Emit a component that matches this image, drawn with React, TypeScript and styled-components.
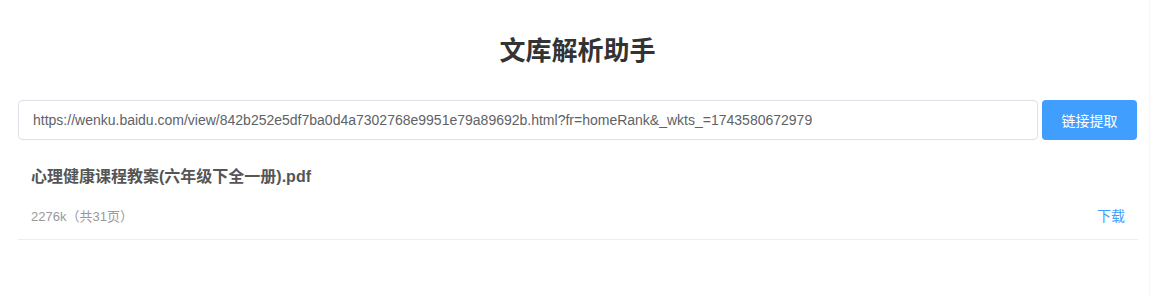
import React from "react";
import styled, { createGlobalStyle } from "styled-components";

const Global = createGlobalStyle`
  html, body { margin: 0; padding: 0; background: #fff; }
  body { font-family: "Liberation Sans", Arial, "Noto Sans CJK SC", sans-serif; }
  * { box-sizing: border-box; }
`;

const Page = styled.div`
  width: 1150px;
  min-height: 298px;
  border-right: 1px solid #f6f7f8;
  padding: 31px 12px 0 18px;
`;

const Title = styled.h1`
  margin: 0;
  height: 36px;
  line-height: 36px;
  text-align: center;
  font-size: 26px;
  font-weight: 700;
  color: #333;
  font-family: "Noto Sans CJK SC", sans-serif;
`;

const SearchRow = styled.div`
  display: flex;
  gap: 4px;
  margin-top: 33px;
  width: 1119px;
`;

const UrlInput = styled.input`
  flex: 1;
  height: 40px;
  border: 1px solid #dcdfe6;
  border-radius: 4px;
  padding: 0 14px;
  font-size: 14px;
  color: #606266;
  font-family: "Liberation Sans", Arial, sans-serif;
  outline: none;
  background: #fff;
`;

const Button = styled.button`
  width: 95px;
  height: 40px;
  border: none;
  border-radius: 4px;
  background: #409eff;
  color: #fff;
  font-size: 14px;
  font-family: "Noto Sans CJK SC", sans-serif;
  cursor: pointer;
`;

const ResultItem = styled.div`
  width: 1120px;
  margin-top: 25px;
  padding: 0 13px 14px 13px;
  border-bottom: 1px solid #ebeef5;
`;

const FileName = styled.div`
  font-size: 16px;
  line-height: 24px;
  font-weight: 700;
  color: #555;
  font-family: "Liberation Sans", Arial, "Noto Sans CJK SC", sans-serif;
`;

const MetaRow = styled.div`
  display: flex;
  justify-content: space-between;
  align-items: center;
  margin-top: 16px;
  height: 20px;
`;

const Meta = styled.span`
  font-size: 13px;
  color: #999;
  font-family: "Liberation Sans", Arial, "Noto Sans CJK SC", sans-serif;
`;

const Download = styled.a`
  font-size: 14px;
  color: #409eff;
  text-decoration: none;
  font-family: "Noto Sans CJK SC", sans-serif;
  cursor: pointer;
`;

export default function App() {
  return (
    <>
      <Global />
      <Page>
        <Title>文库解析助手</Title>
        <SearchRow>
          <UrlInput
            readOnly
            value="https://wenku.baidu.com/view/842b252e5df7ba0d4a7302768e9951e79a89692b.html?fr=homeRank&_wkts_=1743580672979"
          />
          <Button>链接提取</Button>
        </SearchRow>
        <ResultItem>
          <FileName>心理健康课程教案(六年级下全一册).pdf</FileName>
          <MetaRow>
            <Meta>2276k（共31页）</Meta>
            <Download>下载</Download>
          </MetaRow>
        </ResultItem>
      </Page>
    </>
  );
}
